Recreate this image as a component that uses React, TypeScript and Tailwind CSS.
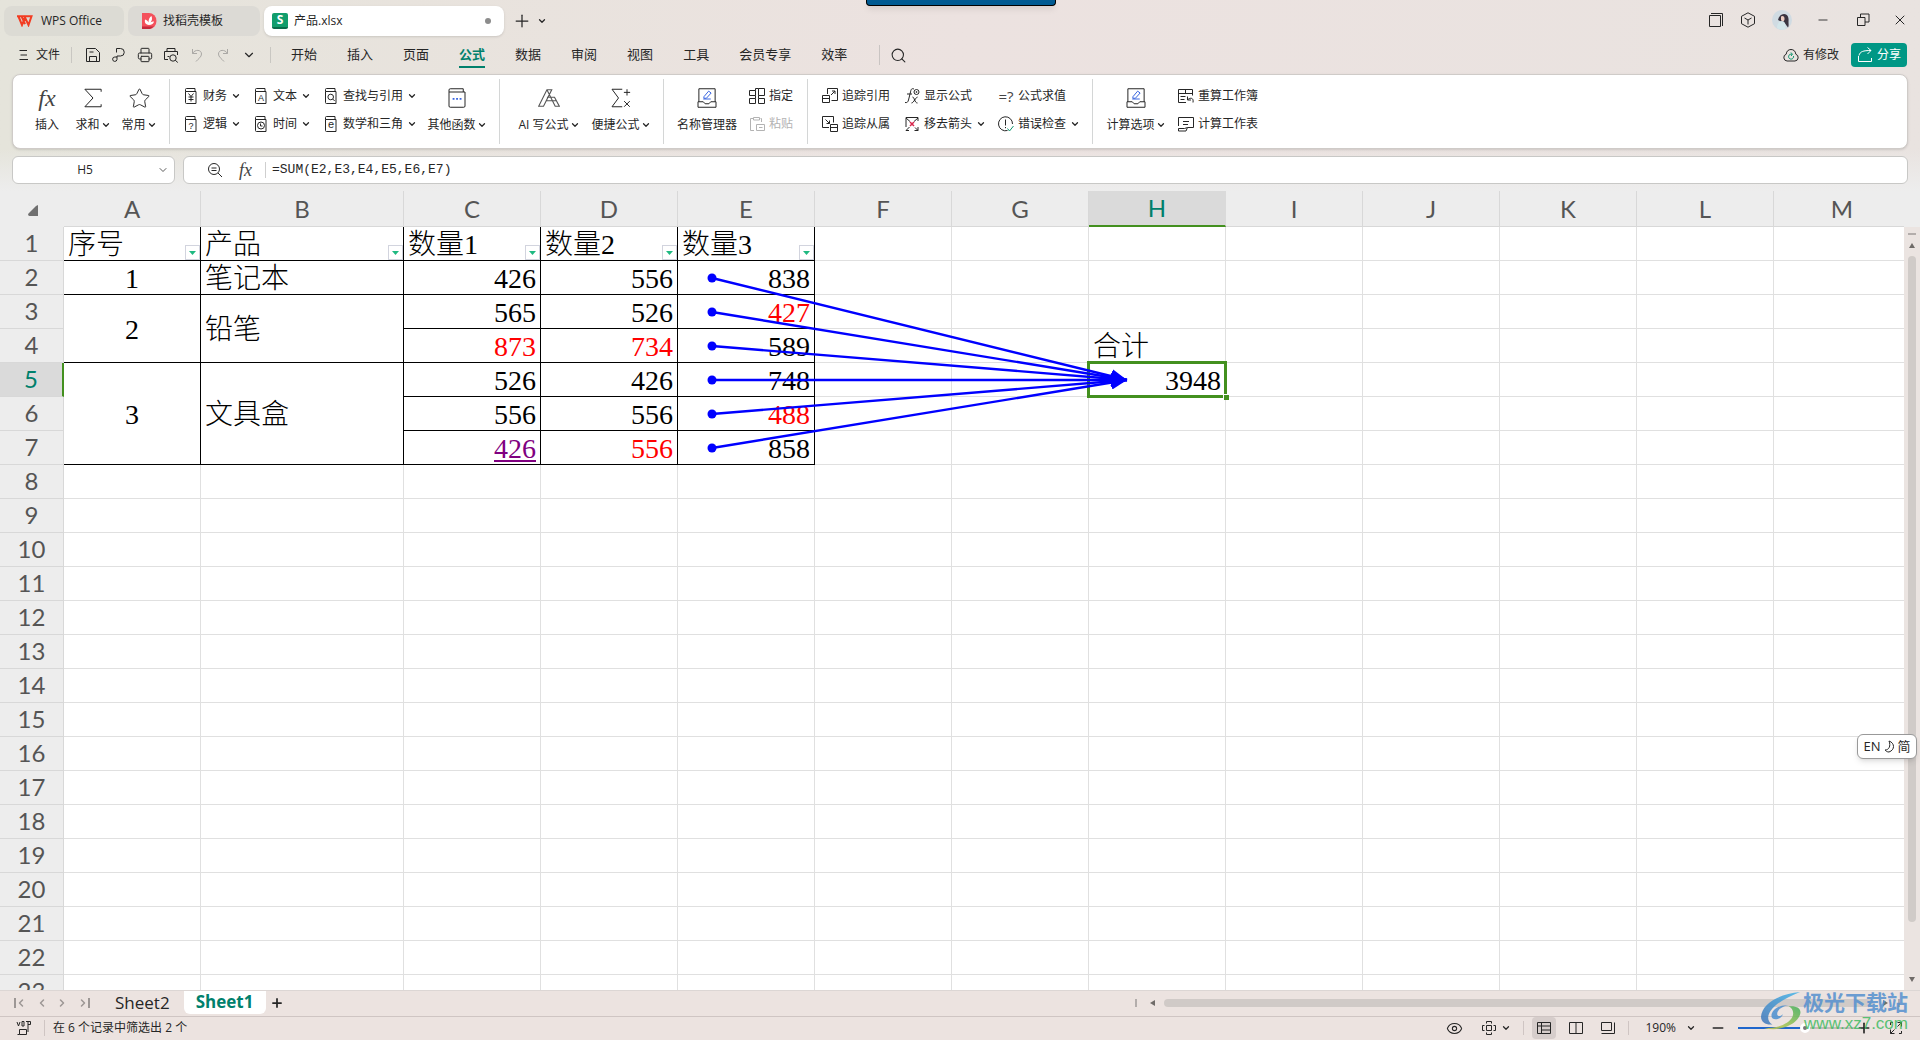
import { useState } from "react";
import type { ReactNode } from "react";
import clsx from "clsx";
import { ChevronDown, ChevronLeft, ChevronRight, Eye, Minus, Plus, Printer, Search, Star, X } from "lucide-react";

// App.tsx — spreadsheet window: title tabs, formula ribbon, grid with trace arrows

interface Cell {
  text: string;
  tone?: "red" | "link";
}

const MENU = ["开始", "插入", "页面", "公式", "数据", "审阅", "视图", "工具", "会员专享", "效率"];
const COLUMNS = ["A", "B", "C", "D", "E", "F", "G", "H", "I", "J", "K", "L", "M"];
const ROW_COUNT = 23;
const HEADINGS = ["序号", "产品", "数量1", "数量2", "数量3"];

// merged blocks in columns A and B, keyed by first row
const MERGED: Record<number, { span: number; id: string; name: string }> = {
  2: { span: 1, id: "1", name: "笔记本" },
  3: { span: 2, id: "2", name: "铅笔" },
  5: { span: 3, id: "3", name: "文具盒" },
};

const VALUES: Record<number, Cell[]> = {
  2: [{ text: "426" }, { text: "556" }, { text: "838" }],
  3: [{ text: "565" }, { text: "526" }, { text: "427", tone: "red" }],
  4: [{ text: "873", tone: "red" }, { text: "734", tone: "red" }, { text: "589" }],
  5: [{ text: "526" }, { text: "426" }, { text: "748" }],
  6: [{ text: "556" }, { text: "556" }, { text: "488", tone: "red" }],
  7: [{ text: "426", tone: "link" }, { text: "556", tone: "red" }, { text: "858" }],
};

/* ---------- icons ---------- */

function Icon({ size = 16, children, className }: { size?: number; children: ReactNode; className?: string }) {
  return (
    <svg
      width={size}
      height={size}
      viewBox="0 0 16 16"
      fill="none"
      stroke="currentColor"
      strokeWidth={16 / size}
      className={clsx("shrink-0", className)}
      aria-hidden
    >
      {children}
    </svg>
  );
}

function BookIcon({ children }: { children: ReactNode }) {
  return (
    <Icon>
      <path d="M2.500 3.500v-2a1 1 0 0 1 1-1h8.500v3M2.500 3.500h10.500v12H3.500a1 1 0 0 1-1-1z" />
      {children}
    </Icon>
  );
}

const glyph = { fontSize: 9, fontFamily: "Liberation Sans", textAnchor: "middle" as const, fill: "currentColor", stroke: "none" };

const YenIcon = () => <BookIcon><path d="m5.500 5.500 2.500 3 2.500-3M8 8.500v5M5.500 9h5M5.500 11.500h5" /></BookIcon>;
const HelpIcon = () => <BookIcon><text x="8" y="13" {...glyph}>?</text></BookIcon>;
const TextIcon = () => <BookIcon><text x="8" y="13" {...glyph}>A</text></BookIcon>;
const MathIcon = () => <BookIcon><text x="8" y="12" {...glyph} fontSize={11}>e</text></BookIcon>;
const TimeIcon = () => <BookIcon><circle cx="8" cy="9.500" r="3.500" /><path d="M7.500 7.500V10H9.500" /></BookIcon>;
const LookupIcon = () => <BookIcon><circle cx="7.700" cy="9" r="2.800" /><path d="m9.700 11 2 2" /></BookIcon>;

const OtherFnIcon = () => (
  <Icon size={20}>
    <path d="M1.600 3.200v-1.600a1 1 0 0 1 1-1h10.400v2.600M1.600 3.200h12.800v11.200a1 1 0 0 1-1 1H2.600a1 1 0 0 1-1-1z" />
    <path d="M4.500 8.700h1.500M7.300 8.700h1.500M10.100 8.700h1.500" stroke="#3b66e0" strokeWidth="1.500" />
  </Icon>
);

const SigmaIcon = () => <Icon size={20}><path d="M14.500 3V1H1.500l6.500 7-6.500 7h13v-2" /></Icon>;

const AiIcon = () => (
  <Icon size={22} className="text-[#555]">
    <path d="M.5 14 6.500 2h3.500L4 14zM6.500 2l6 12h3L12 7.500H6.500M10 2 6 10h7" strokeWidth=".8" />
  </Icon>
);

const QuickIcon = () => (
  <Icon size={20}>
    <path d="M9 1H.8l5.200 7-5.200 7H9M12.800 1v5M10.300 3.500h5M10.500 10.500l4.500 4.500M15 10.500 10.500 15" />
  </Icon>
);

const ManagerIcon = () => (
  <Icon size={20}>
    <path d="M1.500 11V.6h13V11M.8 11h4.200l1.500 1.600h3L11 11h4.200v4.400H.8z" />
    <path d="m5.500 7 3.800-4.500 2 1.500L7.500 8.200H5.500zM5 8.800h6" stroke="#3b66e0" />
  </Icon>
);

const AssignIcon = () => <Icon><path d="M.5 2.500h6v5h-6zM9.500 .5h6v7h-6zM.5 10.500h6v5h-6zM9.500 10.500h6v5h-6zM6.500 2.500V.5h3M6.500 7.500v3M9.500 7.500v3" /></Icon>;
const PasteIcon = () => <Icon><path d="M5 2.500H1.500v12H5M11.500 2.500h1V6M4.500 4V1.500h6V4zM7.500 8.500h8v6h-8zM10 11.500h3.500" /></Icon>;
const PrecedentIcon = () => <Icon><path d="M5.500 6V.5h10v12H9.500M.5 7.500h7v7h-7zM.5 10.500h7M9 7l4-4M10 3h3v3" /></Icon>;
const DependentIcon = () => <Icon><path d="M7 11.500H.5V.5h11v6M8.500 8.500h7v7h-7zM8.500 11.500h7M3.500 3.500l4 4M7.500 4.500v3h-3" /></Icon>;
const ShowIcon = () => <Icon><path d="M10 1C7.500 0 7 1.500 6.500 4L4.500 12c-.5 2-1.500 3-3.500 2.500M3 6h5M8.500 9c2 0 2 6 5 6M13.500 9c-1.500 0-4 6-6 6" /><circle cx="12.500" cy="4" r="2.500" /><circle cx="12.500" cy="4" r=".5" /></Icon>;
const RemoveIcon = () => <Icon><path d="M2 11V1.500h12V5M2 2l4 3.500M14 2l-4 3.500M2 14.500h3M2 14.500l3.500-3.500M14 14.500 11 11.500M14 11v3.500h-3.500" /><path d="m6 6 4 4M10 6l-4 4" stroke="#d8264c" strokeWidth="1.500" /></Icon>;
const CheckIcon = () => <Icon><path d="M14.500 8a7 7 0 1 0-5 6.500M7.500 3.500v6M7.500 11v1.200" /><path d="m9.500 12.500 2 2.500 4-5" stroke="#0f9670" /></Icon>;
const RecalcIcon = () => <Icon><path d="M8 14.500H.5v-13h14v6M.5 5.500h14M7.500 1.500v4M2.500 8.500h5M2.500 11.500h4M15 14.500c1-5-3-5-5-3M9.500 8.500v3.500h3.500" /></Icon>;
const CalcSheetIcon = () => <Icon><path d="M.5 10V1.500h15v10H9.500M5 5.500h6M5 8.500h5M.5 12.500h6l3-1-1.500 3.500H.5z" /></Icon>;

const FxMark = ({ className }: { className?: string }) => (
  <span className={clsx("font-['Liberation_Serif',serif] italic text-[#444]", className)}>fx</span>
);

const Caret = () => <ChevronDown size={10} strokeWidth={3} className="shrink-0" />;

/* ---------- title bar ---------- */

function TitleBar() {
  return (
    <header className="flex h-9 items-end pl-1">
      <button className="flex h-[30px] w-[120px] items-center gap-2 rounded-lg bg-[#dcdbd4] pl-[13px]">
        <svg width="16" height="12" viewBox="0 0 16 12" fill="none" stroke="#f23c22" strokeWidth="2" aria-hidden>
          <path d="M0 1.200h14.500L11.500 10 8 2.500 5 10 1.500 1.500M4.500 1.200l3.500 8" />
        </svg>
        WPS Office
      </button>
      <button className="ml-1 flex h-[30px] w-[132px] items-center gap-[6px] rounded-lg bg-[#dcdad5] pl-[14px]">
        <svg width="15" height="16" viewBox="0 0 15 16" aria-hidden>
          <path d="M0 0h7a7.500 8 0 0 1 0 16H0z" fill="#f4515c" />
          <path d="M0 13.500h12L8 16H0z" fill="#c42a3c" />
          <path d="M7 12C3 11.500 2.500 9 3 6.500 5 7 6 8 6.500 9.500 6.500 6.500 7.500 4 9.500 3c1 3 .5 4.500-1 6.500 1-.8 2-1 3.500-1-.5 2-2 3.500-5 3.500z" fill="#fff" />
        </svg>
        找稻壳模板
      </button>
      <div className="ml-1 flex h-[30px] w-60 items-center rounded-lg bg-white px-2 shadow-sm">
        <span className="flex size-4 items-center justify-center rounded-xs border-b-2 border-[#0a6b4a] bg-[#119d6c] text-xs font-bold leading-3 text-white">S</span>
        <span className="ml-[6px]">产品.xlsx</span>
        <span className="ml-auto mr-[5px] size-[6px] rounded-full bg-[#8c8c8c]" />
      </div>
      <button aria-label="新建" className="ml-2 flex h-[30px] items-center"><Plus size={20} strokeWidth={1.500} /></button>
      <button aria-label="标签列表" className="ml-[5px] flex h-[30px] items-center"><Caret /></button>

      <div className="ml-auto flex h-8 items-center">
        <button aria-label="窗口" className="flex w-8 justify-center">
          <Icon><path d="M1.500 3.500h11v11h-11zM3 1.500h11.500V14" /></Icon>
        </button>
        <button aria-label="应用" className="flex w-8 justify-center">
          <Icon><path d="m8 .8 6.500 3.500v7.400L8 15.200l-6.500-3.500V4.300zM4.500 6 8 8l3.500-2M8 8v4.500" /></Icon>
        </button>
        <button aria-label="账号" className="flex w-9 justify-center">
          <svg width="20" height="20" viewBox="0 0 20 20" aria-hidden>
            <circle cx="10" cy="10" r="10" fill="#d0dbe2" />
            <path d="M6 10c1-4 3-6 6-6 4 0 5 4 4.500 8 0 2 .5 4-.5 5.500l-3-4z" fill="#3a3440" />
            <path d="M9 6.500c2-1.500 4 .5 3.500 3S10 12 9 10z" fill="#eccdc2" />
            <path d="M5 18c0-4 2-7 5-7s4 4 3.500 8c-3 1.300-5.500 1-8.500-1z" fill="#d3e6ea" />
          </svg>
        </button>
        <button aria-label="最小化" className="flex w-[46px] justify-center"><Minus size={14} strokeWidth={1.500} /></button>
        <button aria-label="还原" className="flex w-[34px] justify-center">
          <Icon><path d="M2.500 5.500h7.500v8H2.500zM5.500 5.500v-3.500h8.500v8H10" /></Icon>
        </button>
        <button aria-label="关闭" className="flex w-10 justify-center"><X size={16} strokeWidth={1.500} /></button>
      </div>
    </header>
  );
}

/* ---------- menu row ---------- */

function MenuRow() {
  const [active, setActive] = useState("公式");
  return (
    <nav className="flex h-[38px] items-center pl-[19px] pr-[13px]">
      <button className="flex items-center gap-[7px]">
        <svg width="10" height="12" viewBox="0 0 10 12" stroke="currentColor" aria-hidden>
          <path d="M.5 1.500h7.500M1.500 6H8M.5 10.500h8.500" />
        </svg>
        文件
      </button>
      <span className="ml-[11px] h-4 w-px bg-[#c9c7c2]" />
      <div className="ml-2 flex items-center">
        <button aria-label="保存" className="flex w-[26px] justify-center">
          <Icon><path d="M1.500 1.500h9l4 4v9h-13zM4.500 14.500v-5h7v5M4.500 5h4" /></Icon>
        </button>
        <button aria-label="输出" className="flex w-[26px] justify-center">
          <Icon><path d="M5.500 5.500v-4h4a3.500 3.500 0 0 1 0 7.500H6v3.500a2.200 2.200 0 1 1-2.200-2.500H6" /></Icon>
        </button>
        <button aria-label="打印" className="flex w-[26px] justify-center"><Printer size={16} strokeWidth={1.500} /></button>
        <button aria-label="打印预览" className="flex w-[26px] justify-center">
          <Icon><path d="M4 4.500v-3h8v3M5 12.500H1.500v-8h13V8M4.500 9.500h2" /><circle cx="10" cy="11" r="3.200" /><path d="m12.300 13.300 2.500 2.200" /></Icon>
        </button>
        <button aria-label="撤销" disabled className="flex w-[26px] justify-center text-[#aaa8a5]">
          <Icon><path d="M3.500 2v4.500H8M3.500 6.500C6 2 12.500 2.500 12.500 7c0 3-3 4.500-5.500 7.500" /></Icon>
        </button>
        <button aria-label="恢复" disabled className="flex w-[26px] justify-center text-[#aaa8a5]">
          <Icon><path d="M12.500 2v4.500H8M12.500 6.500C10 2 3.500 2.500 3.500 7c0 3 3 4.500 5.500 7.500" /></Icon>
        </button>
        <button aria-label="更多" className="flex w-[26px] justify-center"><ChevronDown size={14} strokeWidth={2} /></button>
      </div>
      <span className="ml-2 h-4 w-px bg-[#c9c7c2]" />
      <div className="ml-5 flex items-center gap-[30px] text-[13px]">
        {MENU.map((m) => (
          <button
            key={m}
            onClick={() => setActive(m)}
            className={clsx("border-b-2 pt-[2px] pb-px leading-[21px]", m === active ? "border-[#00806c] font-bold text-[#00806c]" : "border-transparent")}
          >
            {m}
          </button>
        ))}
      </div>
      <span className="ml-8 h-5 w-px bg-[#c9c4c2]" />
      <button aria-label="搜索" className="ml-[10px]"><Search size={17} strokeWidth={1.500} /></button>

      <button className="ml-auto flex items-center gap-1">
        <Icon>
          <path d="M4 14a3.500 3.500 0 0 1-.8-6.800C3.500 4 5.500 2.500 8 2.500S12.500 4 12.800 7.200A3.500 3.500 0 0 1 12 14z" />
          <path d="M10.500 9a2.500 2.500 0 1 1-1.500-1.700M8 5.500l1.500 1.800L8 9" stroke="#0f9670" />
        </Icon>
        有修改
      </button>
      <button className="ml-3 flex h-6 w-14 items-center justify-center gap-1 rounded bg-[#009785] text-white">
        <Icon><path d="M1.500 9v5.500h13V11M2 8.500c1-4 4-5 12-5M10.500.5l3.500 3-3.500 3.500" /></Icon>
        分享
      </button>
    </nav>
  );
}

/* ---------- ribbon ---------- */

function BigButton({ icon, label, caret, className }: { icon: ReactNode; label: string; caret?: boolean; className: string }) {
  return (
    <button className={clsx("flex flex-col items-center justify-center gap-2 whitespace-nowrap pb-[3px]", className)}>
      <span className="flex h-[22px] items-center">{icon}</span>
      <span className="flex h-4 items-center gap-px">
        {label}
        {caret && <Caret />}
      </span>
    </button>
  );
}

function SmallButton({ icon, label, caret, disabled }: { icon: ReactNode; label: string; caret?: boolean; disabled?: boolean }) {
  return (
    <button disabled={disabled} className="flex h-7 items-center gap-1 whitespace-nowrap disabled:text-[#b3b3b3]">
      {icon}
      {label}
      {caret && <Caret />}
    </button>
  );
}

const Divider = () => <span className="my-1 w-px shrink-0 bg-[#d4d6d6]" />;

function Ribbon() {
  return (
    <section className="mx-3 flex h-[75px] items-stretch rounded-lg border border-[#cfcbc8] bg-white shadow">
      <div className="flex pl-[11px] pr-[7px]">
        <BigButton className="w-[46px]" icon={<FxMark className="text-2xl leading-[22px]" />} label="插入" />
        <BigButton className="w-[46px]" icon={<SigmaIcon />} label="求和" caret />
        <BigButton className="w-[46px]" icon={<Star size={23} strokeWidth={1} />} label="常用" caret />
      </div>
      <Divider />
      <div className="flex pl-[13px] pr-3">
        <div className="grid grid-cols-[70px_70px_104px] content-center pb-[3px]">
          <SmallButton icon={<YenIcon />} label="财务" caret />
          <SmallButton icon={<TextIcon />} label="文本" caret />
          <SmallButton icon={<LookupIcon />} label="查找与引用" caret />
          <SmallButton icon={<HelpIcon />} label="逻辑" caret />
          <SmallButton icon={<TimeIcon />} label="时间" caret />
          <SmallButton icon={<MathIcon />} label="数学和三角" caret />
        </div>
        <BigButton className="w-[60px]" icon={<OtherFnIcon />} label="其他函数" caret />
      </div>
      <Divider />
      <div className="flex gap-[10px] pl-[17px] pr-3">
        <BigButton className="w-16" icon={<AiIcon />} label="AI 写公式" caret />
        <BigButton className="w-[60px]" icon={<QuickIcon />} label="便捷公式" caret />
      </div>
      <Divider />
      <div className="flex gap-3 pl-[13px] pr-[14px]">
        <BigButton className="w-[60px]" icon={<ManagerIcon />} label="名称管理器" />
        <div className="grid content-center pb-[3px]">
          <SmallButton icon={<AssignIcon />} label="指定" />
          <SmallButton icon={<PasteIcon />} label="粘贴" disabled />
        </div>
      </div>
      <Divider />
      <div className="grid grid-cols-[82px_94px_82px] content-center pl-[14px] pr-3 pb-[3px]">
        <SmallButton icon={<PrecedentIcon />} label="追踪引用" />
        <SmallButton icon={<ShowIcon />} label="显示公式" />
        <SmallButton icon={<span className="w-4 text-[15px] text-[#444]">=?</span>} label="公式求值" />
        <SmallButton icon={<DependentIcon />} label="追踪从属" />
        <SmallButton icon={<RemoveIcon />} label="移去箭头" caret />
        <SmallButton icon={<CheckIcon />} label="错误检查" caret />
      </div>
      <Divider />
      <div className="flex gap-3 pl-[13px]">
        <BigButton className="w-[60px]" icon={<ManagerIcon />} label="计算选项" caret />
        <div className="grid content-center pb-[3px]">
          <SmallButton icon={<RecalcIcon />} label="重算工作簿" />
          <SmallButton icon={<CalcSheetIcon />} label="计算工作表" />
        </div>
      </div>
    </section>
  );
}

function FormulaBar() {
  return (
    <div className="flex gap-2 bg-linear-to-b from-transparent to-[#ededed] px-3 py-[7px]">
      <div className="flex h-7 w-[163px] items-center rounded-md border border-[#c8c8c6] bg-white pr-[5px]">
        <input aria-label="名称框" defaultValue="H5" className="min-w-0 flex-1 text-center outline-none" />
        <button aria-label="名称列表"><ChevronDown size={12} strokeWidth={1.500} /></button>
      </div>
      <div className="flex h-7 flex-1 items-center rounded-md border border-[#c8c8c6] bg-white pl-[23px]">
        <button aria-label="缩放"><Icon><circle cx="7" cy="7" r="5.500" /><path d="m11 11 4 4M4.500 6h5M4.500 8.500h5" /></Icon></button>
        <button aria-label="插入函数" className="ml-4 w-6 text-left"><FxMark className="text-lg leading-6" /></button>
        <span className="mx-[2px] h-4 w-px bg-[#cfcfcf]" />
        <input
          aria-label="编辑栏"
          defaultValue="=SUM(E2,E3,E4,E5,E6,E7)"
          className="ml-1 min-w-0 flex-1 font-['Liberation_Mono',monospace] text-[13px] outline-none"
        />
      </div>
    </div>
  );
}

/* ---------- grid ---------- */

const cellBase = "h-[34px] overflow-hidden whitespace-nowrap border-b border-r p-0 pt-[2px] px-1 leading-[30px]";
const plain = "border-[#e0e0e0]";
const boxed = "border-black";

function ValueCell({ cell }: { cell: Cell }) {
  return (
    <td className={clsx(cellBase, boxed, "text-right", cell.tone === "red" && "text-[#ff0000]")}>
      {cell.tone === "link" ? (
        <a href="#c7" className="text-[#800080] underline decoration-2 underline-offset-2">{cell.text}</a>
      ) : (
        cell.text
      )}
    </td>
  );
}

function Row({ n }: { n: number }) {
  const merged = MERGED[n];
  const values = VALUES[n];
  const selected = n === 5;
  return (
    <tr>
      <th
        scope="row"
        className={clsx(
          "h-[34px] border-b border-r border-[#d8d8d8] p-0 pb-[2px] font-['Lato',sans-serif] text-2xl font-normal leading-[31px]",
          selected ? "border-r-2 border-r-[#43901f] bg-[#dadada] text-[#00806c]" : "bg-[#ededed] text-[#555]",
        )}
      >
        {n}
      </th>
      {n === 1 &&
        HEADINGS.map((h) => (
          <td key={h} className={clsx(cellBase, boxed, "relative")}>
            {h}
            <button aria-label={`筛选 ${h}`} className="absolute bottom-0 right-0 flex size-[15px] items-center justify-center border border-[#d2d4de] bg-white">
              <svg width="7" height="4" viewBox="0 0 7 4" fill="#1fb981" aria-hidden><path d="M0 0h7L3.500 4z" /></svg>
            </button>
          </td>
        ))}
      {merged && (
        <>
          <td rowSpan={merged.span} className={clsx(cellBase, boxed, "text-center")}>{merged.id}</td>
          <td rowSpan={merged.span} className={clsx(cellBase, boxed)}>{merged.name}</td>
        </>
      )}
      {values && values.map((c, i) => <ValueCell key={i} cell={c} />)}
      {COLUMNS.slice(n <= 7 ? 5 : 0).map((col) => {
        if (col === "H" && n === 4) {
          return <td key={col} className={clsx(cellBase, plain)}>合计</td>;
        }
        if (col === "H" && n === 5) {
          return (
            <td key={col} className={clsx("h-[34px] border-b border-r p-0 px-1 pt-[2px] leading-[30px]", plain, "relative text-right")}>
              3948
              <span className="absolute -inset-[2px] border-3 border-[#43901f]" />
              <span className="absolute -bottom-1 -right-1 size-[6px] border-l border-t border-white bg-[#43901f]" />
            </td>
          );
        }
        return <td key={col} className={clsx(cellBase, plain)} />;
      })}
    </tr>
  );
}

function TraceArrows() {
  const sources = [87, 121, 155, 189, 223, 257];
  return (
    <svg width="1140" height="280" className="pointer-events-none absolute left-0 top-0" aria-hidden>
      <defs>
        <marker id="head" markerUnits="userSpaceOnUse" markerWidth="17" markerHeight="14" refX="16" refY="7" orient="auto">
          <path d="M0 0 16 7 0 14z" fill="#00f" />
        </marker>
      </defs>
      {sources.map((y) => (
        <g key={y}>
          <circle cx="712" cy={y} r="4.500" fill="#00f" />
          <line x1="712" y1={y} x2="1127" y2="189" stroke="#00f" strokeWidth="2.400" markerEnd="url(#head)" />
        </g>
      ))}
    </svg>
  );
}

function Grid() {
  return (
    <main className="relative flex min-h-0 flex-1 overflow-hidden bg-[#ededed]">
      <div className="min-w-0 flex-1 overflow-hidden">
        <table className="w-[1911px] table-fixed border-separate border-spacing-0 bg-white font-['Liberation_Serif','Noto_Sans_CJK_SC',serif] text-[28px] font-light text-black">
          <colgroup>
            <col className="w-16" />
            {COLUMNS.map((c) => <col key={c} className={c === "B" ? "w-[203px]" : "w-[137px]"} />)}
          </colgroup>
          <thead>
            <tr className="font-['Lato',sans-serif] text-2xl">
              <th aria-label="全选" className="h-9 bg-[#ededed] p-0">
                <svg width="10" height="11" viewBox="0 0 10 11" className="ml-7 mt-[3px]" fill="#707070" aria-hidden>
                  <path d="M10 0v11H1.500a1.500 1.500 0 0 1-1-2.500L8 1z" />
                </svg>
              </th>
              {COLUMNS.map((c) => (
                <th
                  key={c}
                  scope="col"
                  className={clsx(
                    "h-9 border-b border-r p-0 font-normal leading-8",
                    c === "H" ? "border-b-2 border-b-[#43901f] border-r-[#dadada] bg-[#dadada] text-[#00806c]" : "border-[#d8d8d8] bg-[#ededed] text-[#555]",
                  )}
                >
                  {c}
                </th>
              ))}
            </tr>
          </thead>
          <tbody>
            {Array.from({ length: ROW_COUNT }, (_, i) => <Row key={i} n={i + 1} />)}
          </tbody>
        </table>
      </div>
      <div className="mt-9 flex w-4 flex-col items-center bg-[#ebe4e1] text-[#6f6b68]">
        <span className="mt-[6px] h-[2px] w-2 bg-[#b3adab]" />
        <svg width="6" height="5" viewBox="0 0 6 5" fill="currentColor" className="mt-2" aria-hidden><path d="M3 0 6 5H0z" /></svg>
        <span className="mt-2 w-2 flex-[12] rounded-full bg-[#d0cbc8]" />
        <span className="flex-1" />
        <svg width="6" height="5" viewBox="0 0 6 5" fill="currentColor" className="mb-2" aria-hidden><path d="M0 0h6L3 5z" /></svg>
      </div>
      <TraceArrows />
    </main>
  );
}

/* ---------- bottom bars ---------- */

function SheetBar() {
  return (
    <div className="flex h-[27px] items-center border-y border-t-[#dcd6d4] border-b-[#cfc5c3] pl-[14px] pb-[2px] text-[17px]">
      <div className="flex w-[76px] items-center justify-between text-[#9d9795]">
        <button aria-label="第一张" className="flex"><span className="h-[10px] w-[2px] self-center bg-current" /><ChevronLeft size={12} strokeWidth={3} className="-ml-px" /></button>
        <button aria-label="上一张"><ChevronLeft size={12} strokeWidth={3} /></button>
        <button aria-label="下一张"><ChevronRight size={12} strokeWidth={3} /></button>
        <button aria-label="最后一张" className="flex"><ChevronRight size={12} strokeWidth={3} className="-mr-px" /><span className="h-[10px] w-[2px] self-center bg-current" /></button>
      </div>
      <button className="ml-[25px] leading-6">Sheet2</button>
      <button className="ml-[14px] flex h-[23px] w-[82px] items-center justify-center self-start rounded-b-md bg-white font-bold text-[#00806c]">Sheet1</button>
      <button aria-label="新建工作表" className="ml-1"><Plus size={14} strokeWidth={3} /></button>
      <div className="ml-auto flex w-[785px] items-center text-[#6f6b68]">
        <span className="h-2 w-[2px] bg-[#b3adab]" />
        <svg width="5" height="6" viewBox="0 0 5 6" fill="currentColor" className="ml-[13px]" aria-hidden><path d="M5 0v6L0 3z" /></svg>
        <span className="ml-[9px] h-2 flex-1 rounded-full bg-[#d0cac7]" />
        <svg width="5" height="6" viewBox="0 0 5 6" fill="currentColor" className="mx-[10px]" aria-hidden><path d="M0 0v6l5-3z" /></svg>
        <span className="mr-5 h-2 w-[2px] bg-[#b3adab]" />
      </div>
    </div>
  );
}

function StatusBar() {
  return (
    <footer className="flex h-[23px] items-center pl-4 pr-4 pb-px">
      <svg width="16" height="16" viewBox="0 0 16 16" fill="none" stroke="currentColor" aria-hidden>
        <path d="M1 2l1.500 4L4 2M6 1.500v4.500h2V1.500zM10 1.500h4.500v3H12M12 1.500V12M3.500 9.500h7v5h-7zM3.500 14.500H1.500" />
      </svg>
      <span className="ml-3 h-4 w-px bg-[#cfc5c3]" />
      <span className="ml-2">在 6 个记录中筛选出 2 个</span>
      <div className="ml-auto flex items-center">
        <button aria-label="护眼"><Eye size={17} strokeWidth={1.500} /></button>
        <button aria-label="阅读模式" className="ml-[18px] flex items-center gap-1">
          <Icon><path d="M5.500 5.500h5v5h-5zM5.500 3.500v-2h5v2M5.500 12.500v2h5v-2M3.500 5.500h-2v5h2M12.500 5.500h2v5h-2" /></Icon>
          <Caret />
        </button>
        <span className="ml-3 h-[14px] w-px bg-[#cfc5c3]" />
        <button aria-label="普通视图" className="ml-2 flex h-[22px] w-6 items-center justify-center rounded bg-[#d6cdcb]">
          <Icon><path d="M1.500 2.500h13v11h-13zM1.500 6h13M5.500 2.500v11M5.500 10h9" /></Icon>
        </button>
        <button aria-label="分页预览" className="ml-3"><Icon><path d="M1.500 2.500h13v11h-13zM8 2.500v11" /></Icon></button>
        <button aria-label="页面布局" className="ml-4"><Icon><path d="M1.500 2.500h10v8h-10zM1.500 13.500h13v-11" /></Icon></button>
        <span className="ml-3 h-[14px] w-px bg-[#cfc5c3]" />
        <button className="ml-4 flex items-center gap-[10px]">190% <Caret /></button>
        <button aria-label="缩小" className="ml-[14px]"><Minus size={16} strokeWidth={2.500} /></button>
        <input
          aria-label="显示比例"
          type="range"
          defaultValue={57}
          className="ml-3 h-[2px] w-[118px] appearance-none bg-linear-to-r from-[#1f66cc] from-57% to-[#c4bcba] to-57% [&::-webkit-slider-thumb]:size-[10px] [&::-webkit-slider-thumb]:appearance-none [&::-webkit-slider-thumb]:rounded-full [&::-webkit-slider-thumb]:border-3 [&::-webkit-slider-thumb]:border-white [&::-webkit-slider-thumb]:bg-[#777]"
        />
        <button aria-label="放大"><Plus size={16} strokeWidth={2.500} /></button>
        <button aria-label="全屏" className="ml-4"><Icon><path d="M9.500 2.500h4v4M13.500 2.500 9.500 6.500M6.500 13.500h-4v-4M2.500 13.500l4-4M2.500 5V2.500H5M13.500 11v2.500H11" /></Icon></button>
      </div>
    </footer>
  );
}

function Watermark() {
  return (
    <div className="pointer-events-none absolute bottom-[6px] right-3 flex items-center opacity-85">
      <svg width="44" height="40" viewBox="0 0 44 42" aria-hidden>
        <defs>
          <linearGradient id="wmBlue" x1="0" y1="1" x2="1" y2="0"><stop offset="0" stopColor="#3f74b8" /><stop offset="1" stopColor="#44b6ea" /></linearGradient>
          <linearGradient id="wmGreen" x1="0" y1="1" x2="1" y2="0"><stop offset="0" stopColor="#d9cf4e" /><stop offset="1" stopColor="#3fae5a" /></linearGradient>
        </defs>
        <path d="M42 0C20 2 2 12 1 26c0 6 6 9 12 8C8 31 7 26 11 20 17 11 30 5 42 0z" fill="url(#wmBlue)" />
        <path d="M12 25c0-6 8-12 18-11-7 1-12 5-12 9 0 3 4 3 6 0-1 6-12 8-12 2z" fill="#4a8fd0" />
        <path d="M30 15c12-1 16 5 9 14-7 8-20 12-35 9 14 0 26-4 30-12 2-5 0-9-4-11z" fill="url(#wmGreen)" />
      </svg>
      <div className="w-[105px] whitespace-nowrap text-right">
        <div className="text-[21px] font-bold leading-6 text-[#5590cf]">极光下载站</div>
        <div className="font-['Liberation_Sans',sans-serif] text-[17px] leading-5 text-[#41bb62]">www.xz7.com</div>
      </div>
    </div>
  );
}

export default function App() {
  return (
    <div className="relative flex h-screen flex-col overflow-hidden bg-linear-to-r from-[#e5e4db] via-[#ece2e0] to-[#e9e3e0] font-['Open_Sans','Noto_Sans_CJK_SC',sans-serif] text-xs text-[#262626]">
      <div className="absolute left-[866px] top-0 h-[6px] w-[190px] rounded-b border border-t-0 border-black bg-[#005a92] shadow-md" />
      <TitleBar />
      <MenuRow />
      <Ribbon />
      <FormulaBar />
      <Grid />
      <div className="bg-[#ece3e0]">
        <SheetBar />
        <StatusBar />
      </div>
      <div className="absolute right-[3px] top-[734px] flex h-[25px] w-[60px] items-center justify-center gap-[3px] rounded-md border border-[#999] bg-white text-[13px] shadow-md">
        EN
        <svg width="11" height="13" viewBox="0 0 11 13" fill="none" stroke="currentColor" aria-hidden><path d="M5 1c6 2 6 9 0 11-2 0-3-1-4-2 4 0 6-4 4-9z" /></svg>
        简
      </div>
      <Watermark />
    </div>
  );
}
